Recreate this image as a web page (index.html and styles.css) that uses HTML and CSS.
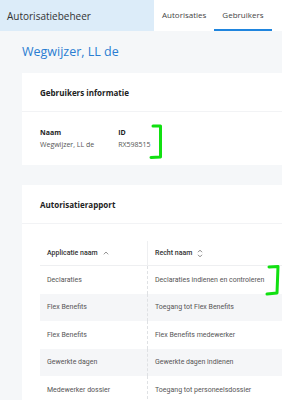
FILE: index.html
```html
<!DOCTYPE html>
<html lang="nl">
<head>
  <meta charset="UTF-8">
  <title>Autorisatiebeheer</title>
  <link rel="stylesheet" href="styles.css">
</head>
<body>
  <!-- Top bar -->
  <header class="topbar">
    <div class="app-title">Autorisatiebeheer</div>
    <nav class="tabs">
      <a class="tab">Autorisaties</a>
      <a class="tab active">Gebruikers</a>
    </nav>
  </header>

  <main class="page">
    <h1 class="user-name">Wegwijzer, LL de</h1>

    <section class="card">
      <div class="card-header">Gebruikers informatie</div>
      <div class="card-body info">
        <div class="field">
          <div class="label">Naam</div>
          <div class="value">Wegwijzer, LL de</div>
        </div>
        <div class="field">
          <div class="label">ID</div>
          <div class="value">RX598515</div>
        </div>
      </div>
    </section>

    <section class="card">
      <div class="card-header">Autorisatierapport</div>
      <div class="card-body report">
        <div class="grid">
          <div class="row head">
            <div class="cell">Applicatie naam
              <svg class="sort" width="6" height="4" viewBox="0 0 6 4"><path d="M0.8 3.3 L3 1 L5.2 3.3" fill="none" stroke="#888" stroke-width="0.9"/></svg>
            </div>
            <div class="cell">Recht naam
              <svg class="sort" width="6" height="9" viewBox="0 0 6 9"><path d="M1 3.2 L3 1.2 L5 3.2 M1 5.8 L3 7.8 L5 5.8" fill="none" stroke="#777" stroke-width="0.9"/></svg>
            </div>
          </div>
          <div class="row"><div class="cell">Declaraties</div><div class="cell">Declaraties indienen en controleren</div></div>
          <div class="row"><div class="cell">Flex Benefits</div><div class="cell">Toegang tot Flex Benefits</div></div>
          <div class="row"><div class="cell">Flex Benefits</div><div class="cell">Flex Benefits medewerker</div></div>
          <div class="row"><div class="cell">Gewerkte dagen</div><div class="cell">Gewerkte dagen indienen</div></div>
          <div class="row"><div class="cell">Medewerker dossier</div><div class="cell">Toegang tot personeelsdossier</div></div>
        </div>
      </div>
    </section>
  </main>

  <!-- Green annotation marks drawn over the screenshot -->
  <svg class="mark mark-id" width="16" height="38" viewBox="0 0 16 38">
    <path d="M4 3 L11.5 3 L11.5 34 L2 34.5" fill="none" stroke="#11e011" stroke-width="3" stroke-linejoin="round" stroke-linecap="round"/>
  </svg>
  <svg class="mark mark-row" width="18" height="34" viewBox="0 0 18 34">
    <path d="M5 3 L14 2.5 L13 29 L3 30" fill="none" stroke="#11e011" stroke-width="3" stroke-linejoin="round" stroke-linecap="round"/>
  </svg>
</body>
</html>
```

FILE: styles.css
```css
/* Base */
*, ::before, ::after {
  box-sizing: border-box;
  margin: 0;
  padding: 0;
}
body {
  position: relative;
  background-color: #f5f7f9;
  color: #333;
  font-family: 'Open Sans', sans-serif;
  overflow: hidden;
  width: 282px;
  height: 400px;
}

/* Top bar */
.topbar {
  display: flex;
  height: 31px;
  background-color: #ffffff;
}
.app-title {
  width: 154px;
  padding-left: 7px;
  display: flex;
  align-items: center;
  background-color: #dcecf9;
  color: #333;
  font-size: 10px;
}
.tabs {
  display: flex;
}
.tab {
  display: flex;
  align-items: center;
  padding: 0 8px;
  font-size: 8px;
  color: #444;
  border-bottom: 2px solid transparent;
}
.tab.active {
  border-bottom-color: #1f85de;
}

/* Page */
.page {
  width: 330px;
  padding: 0 0 0 22px;
}
.user-name {
  height: 42px;
  display: flex;
  align-items: center;
  padding-bottom: 1px;
  font-size: 12.5px;
  font-weight: 400;
  color: #2a7dd2;
}
.card {
  background-color: #ffffff;
  margin-bottom: 20px;
}
.card-header {
  height: 39px;
  display: flex;
  align-items: center;
  padding-left: 18px;
  font-size: 8px;
  font-weight: 700;
  color: #222;
  border-bottom: 1px solid #f2f3f5;
}
.info {
  display: flex;
  gap: 24px;
  padding: 15px 18px 15px;
  height: 53px;
}
.label {
  font-size: 7px;
  font-weight: 700;
  color: #222;
  line-height: 12px;
}
.value {
  font-size: 7px;
  color: #555;
  line-height: 12px;
}

/* Report table */
.report {
  padding: 17px 0 0 18px;
}
.grid {
  font-family: 'Roboto', sans-serif;
  font-size: 7px;
  color: #555;
}
.row {
  display: flex;
  height: 27.5px;
}
.row:nth-child(odd) {
  background-color: #f5f6f8;
}
.row.head {
  height: 25px;
  background-color: #ffffff;
  font-weight: 500;
  color: #333;
  border-bottom: 1px solid #eeeff1;
}
.cell {
  display: flex;
  align-items: center;
  padding-left: 7px;
  flex: 1;
}
.cell:first-child {
  flex: 0 0 108px;
  border-right: 1px dashed #dfe1e4;
}
.head .cell:first-child {
  border-right: 1px solid #eeeff1;
}
.sort {
  margin-left: 5px;
}

/* Annotation marks */
.mark {
  position: absolute;
}
.mark-id {
  left: 149px;
  top: 123px;
}
.mark-row {
  left: 264px;
  top: 264px;
}
```
